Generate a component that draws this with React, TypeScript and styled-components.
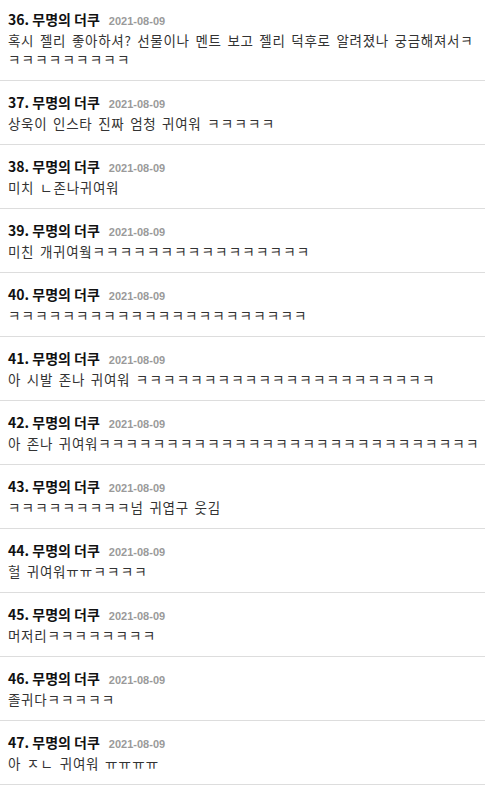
import React from 'react';
import styled, { createGlobalStyle } from 'styled-components';

const GlobalStyle = createGlobalStyle`
  body {
    margin: 0;
    background: #fff;
    font-family: "Noto Sans CJK KR", "Noto Sans", sans-serif;
  }
`;

const List = styled.ul`
  list-style: none;
  margin: -2px 0 0;
  padding: 0;
`;

const Item = styled.li`
  padding: 11px 4px 11px 8px;
  border-bottom: 1px solid #ddd;
`;

const Title = styled.div`
  display: flex;
  align-items: baseline;
  gap: 9px;
  height: 20px;
  line-height: 20px;
`;

const Name = styled.span`
  font-size: 14px;
  font-weight: bold;
  color: #111;
`;

const Date = styled.span`
  font-family: "Liberation Sans", Arial, sans-serif;
  font-size: 11px;
  line-height: 1;
  font-weight: bold;
  color: #9a9a9a;
`;

const Content = styled.div`
  margin-top: 2px;
  font-size: 13.5px;
  line-height: 19px;
  color: #333;
  letter-spacing: 0.7px;
  word-spacing: 2px;
`;

const Jamo = styled.span`
  letter-spacing: 1.2px;
`;

const k = (n: number) => 'ㅋ'.repeat(n);

const comments = [
  { no: 36, text: '혹시 젤리 좋아하셔? 선물이나 멘트 보고 젤리 덕후로 알려졌나 궁금해져서' + k(10) },
  { no: 37, text: '상욱이 인스타 진짜 엄청 귀여워 ' + k(5) },
  { no: 38, text: '미치 ㄴ존나귀여워' },
  { no: 39, text: '미친 개귀여웤' + k(16) },
  { no: 40, text: k(22) },
  { no: 41, text: '아 시발 존나 귀여워 ' + k(22) },
  { no: 42, text: '아 존나 귀여워' + k(28) },
  { no: 43, text: k(9) + '넘 귀엽구 웃김' },
  { no: 44, text: '헐 귀여워ㅠㅠ' + k(4) },
  { no: 45, text: '머저리' + k(8) },
  { no: 46, text: '졸귀다' + k(5) },
  { no: 47, text: '아 ㅈㄴ 귀여워 ㅠㅠㅠㅠ' },
];

function renderText(text: string) {
  return text.split(/([\u3131-\u318E]+)/).map((part, i) =>
    i % 2 === 1 ? <Jamo key={i}>{part}</Jamo> : part
  );
}

function App() {
  return (
    <>
      <GlobalStyle />
      <List>
        {comments.map((c) => (
          <Item key={c.no}>
            <Title>
              <Name>{c.no}. 무명의 더쿠</Name>
              <Date>2021-08-09</Date>
            </Title>
            <Content>{renderText(c.text)}</Content>
          </Item>
        ))}
      </List>
    </>
  );
}

export default App;
